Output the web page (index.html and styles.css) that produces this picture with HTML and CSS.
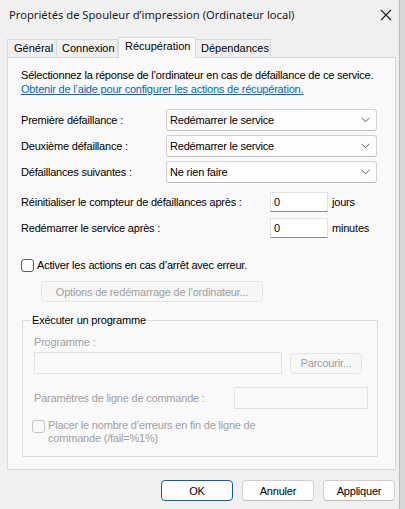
FILE: index.html
```html
<!DOCTYPE html>
<html lang="fr">
<head>
<meta charset="utf-8">
<link rel="stylesheet" href="styles.css">
</head>
<body>
<div class="window">
  <div class="titlebar">
    <span class="title">Propriétés de Spouleur d’impression (Ordinateur local)</span>
    <svg class="close" width="12" height="12" viewBox="0 0 12 12"><path d="M1 1 L11 11 M11 1 L1 11" stroke="#1a1a1a" stroke-width="1.1" fill="none"/></svg>
  </div>
  <div class="tabs">
    <div class="tab t1">Général</div>
    <div class="tab t2">Connexion</div>
    <div class="tab sel">Récupération</div>
    <div class="tab t4">Dépendances</div>
  </div>
  <div class="panel">
    <p class="intro">Sélectionnez la réponse de l’ordinateur en cas de défaillance de ce service.<br><a class="link">Obtenir de l’aide pour configurer les actions de récupération.</a></p>

    <div class="row first">
      <span class="lbl">Première défaillance :</span>
      <div class="combo"><span>Redémarrer le service</span><svg width="9" height="6" viewBox="0 0 9 6"><path d="M0.5 0.8 L4.5 4.8 L8.5 0.8" stroke="#5a5a5a" stroke-width="1" fill="none"/></svg></div>
    </div>
    <div class="row">
      <span class="lbl">Deuxième défaillance :</span>
      <div class="combo"><span>Redémarrer le service</span><svg width="9" height="6" viewBox="0 0 9 6"><path d="M0.5 0.8 L4.5 4.8 L8.5 0.8" stroke="#5a5a5a" stroke-width="1" fill="none"/></svg></div>
    </div>
    <div class="row">
      <span class="lbl">Défaillances suivantes :</span>
      <div class="combo"><span>Ne rien faire</span><svg width="9" height="6" viewBox="0 0 9 6"><path d="M0.5 0.8 L4.5 4.8 L8.5 0.8" stroke="#5a5a5a" stroke-width="1" fill="none"/></svg></div>
    </div>

    <div class="row num first-num">
      <span class="lbl wide">Réinitialiser le compteur de défaillances après :</span>
      <div class="field">0</div><span class="unit">jours</span>
    </div>
    <div class="row num">
      <span class="lbl wide">Redémarrer le service après :</span>
      <div class="field">0</div><span class="unit">minutes</span>
    </div>

    <div class="check-row">
      <span class="box"></span><span>Activer les actions en cas d’arrêt avec erreur.</span>
    </div>
    <div class="btn disabled options">Options de redémarrage de l’ordinateur...</div>

    <div class="group">
      <div class="legend">Exécuter un programme</div>
      <div class="glabel">Programme :</div>
      <div class="prog-row">
        <div class="dfield prog"></div>
        <div class="btn disabled browse">Parcourir...</div>
      </div>
      <div class="param-row">
        <span class="glabel2">Paramètres de ligne de commande :</span>
        <div class="dfield param"></div>
      </div>
      <div class="check-row2">
        <span class="box dbox"></span><span class="dtext">Placer le nombre d’erreurs en fin de ligne de<br>commande (/fail=%1%)</span>
      </div>
    </div>
  </div>
  <div class="buttons">
    <div class="btn ok">OK</div>
    <div class="btn">Annuler</div>
    <div class="btn">Appliquer</div>
  </div>
</div>
</body>
</html>
```
FILE: styles.css
```css
html, body {
  margin: 0;
  padding: 0;
}
body {
  width: 405px;
  height: 509px;
  background: #d8d8d8;
  font-family: "Liberation Sans", Arial, sans-serif;
  font-size: 11px;
  letter-spacing: -0.2px;
  color: #000;
  overflow: hidden;
}
.window {
  width: 400px;
  height: 509px;
  background: #f0f0f0;
  border-right: 1px solid #b9b9b9;
  box-sizing: border-box;
}
.titlebar {
  height: 35px;
  display: flex;
  align-items: flex-start;
  justify-content: space-between;
  padding: 7px 0 0 9px;
  box-sizing: border-box;
}
.title {
  font-family: "Noto Sans", "Open Sans", sans-serif;
  font-size: 11.2px;
  letter-spacing: 0;
  line-height: 16px;
  color: #1a1a1a;
}
.close {
  margin: 2px 7px 0 0;
}
.tabs {
  display: flex;
  align-items: flex-end;
  height: 22px;
  margin-left: 7px;
  position: relative;
  z-index: 1;
}
.tab {
  height: 18px;
  box-sizing: border-box;
  border: 1px solid #d9d9d9;
  border-bottom: none;
  background: #f0f0f0;
  line-height: 17px;
  padding-left: 6px;
  letter-spacing: 0;
}
.t1 { width: 50px; }
.t2 { width: 61px; border-left: none; padding-left: 5px; }
.sel {
  width: 78px;
  height: 21px;
  background: #f9f9f9;
  padding-left: 6px;
  line-height: 16px;
  margin-bottom: -1px;
}
.t4 { width: 75px; border-left: none; padding-left: 5px; }
.panel {
  margin-left: 7px;
  width: 389px;
  height: 413px;
  box-sizing: border-box;
  border: 1px solid #d9d9d9;
  background: #f9f9f9;
  padding: 10px 0 0 13px;
}
.intro {
  margin: 0;
  line-height: 14px;
}
.link {
  color: #0066cc;
  text-decoration: underline;
}
.row {
  display: flex;
  align-items: center;
  height: 22px;
  margin-top: 4px;
}
.row.first { margin-top: 13px; }
.lbl {
  width: 145px;
}
.combo {
  width: 211px;
  height: 22px;
  box-sizing: border-box;
  border: 1px solid #d2d2d2;
  border-bottom-color: #bdbdbd;
  border-radius: 3px;
  background: #fdfdfd;
  display: flex;
  align-items: center;
  justify-content: space-between;
  padding: 0 6px 0 3px;
}
.row.num {
  height: 20px;
  margin-top: 6px;
}
.row.first-num { margin-top: 9px; }
.lbl.wide { width: 249px; }
.field {
  width: 58px;
  height: 20px;
  box-sizing: border-box;
  background: #fff;
  border: 1px solid #e2e2e2;
  border-bottom: 1px solid #888;
  padding: 1px 0 0 3px;
  line-height: 16px;
}
.unit {
  margin-left: 4px;
}
.check-row {
  display: flex;
  align-items: center;
  height: 14px;
  margin-top: 20px;
}
.box {
  width: 13px;
  height: 13px;
  box-sizing: border-box;
  border: 1px solid #5c5c5c;
  border-radius: 3px;
  background: #fcfcfc;
  margin-right: 3px;
  flex: none;
}
.btn {
  width: 72px;
  height: 21px;
  box-sizing: border-box;
  border: 1px solid #d0d0d0;
  border-bottom-color: #bababa;
  border-radius: 4px;
  background: #fdfdfd;
  display: flex;
  align-items: center;
  justify-content: center;
}
.btn.disabled {
  color: #a0a0a0;
  border-color: #e5e5e5;
  background: #f7f7f7;
}
.options {
  width: 222px;
  height: 21px;
  margin: 9px 0 0 20px;
}
.group {
  margin: 18px 0 0 1px;
  width: 356px;
  height: 137px;
  box-sizing: border-box;
  border: 1px solid #dcdcdc;
  padding: 0 0 0 11px;
}
.legend {
  margin: -8px 0 0 -3px;
  background: #f9f9f9;
  width: fit-content;
  padding: 0 1px;
  line-height: 14px;
  color: #000;
}
.glabel {
  color: #a0a0a0;
  margin-top: 8px;
  line-height: 14px;
}
.prog-row {
  display: flex;
  align-items: center;
  margin-top: 3px;
}
.dfield {
  height: 22px;
  box-sizing: border-box;
  border: 1px solid #e3e3e3;
  background: #f9f9f9;
}
.prog { width: 248px; }
.browse {
  width: 72px;
  height: 21px;
  margin-left: 8px;
}
.param-row {
  display: flex;
  align-items: center;
  justify-content: space-between;
  margin-top: 13px;
  width: 334px;
}
.glabel2 { color: #a0a0a0; }
.param { width: 134px; height: 22px; }
.check-row2 {
  display: flex;
  align-items: flex-start;
  margin-top: 10px;
}
.dbox {
  border-color: #c4c4c4;
  background: #f9f9f9;
  margin: 1px 3px 0 -2px;
}
.dtext {
  color: #a0a0a0;
  line-height: 13px;
}
.buttons {
  display: flex;
  justify-content: flex-end;
  gap: 9px;
  margin: 10px 4px 0 0;
}
.btn.ok {
  border: 1px solid #005fb8;
  box-shadow: inset 0 0 0 1px #fdfdfd;
}
```
